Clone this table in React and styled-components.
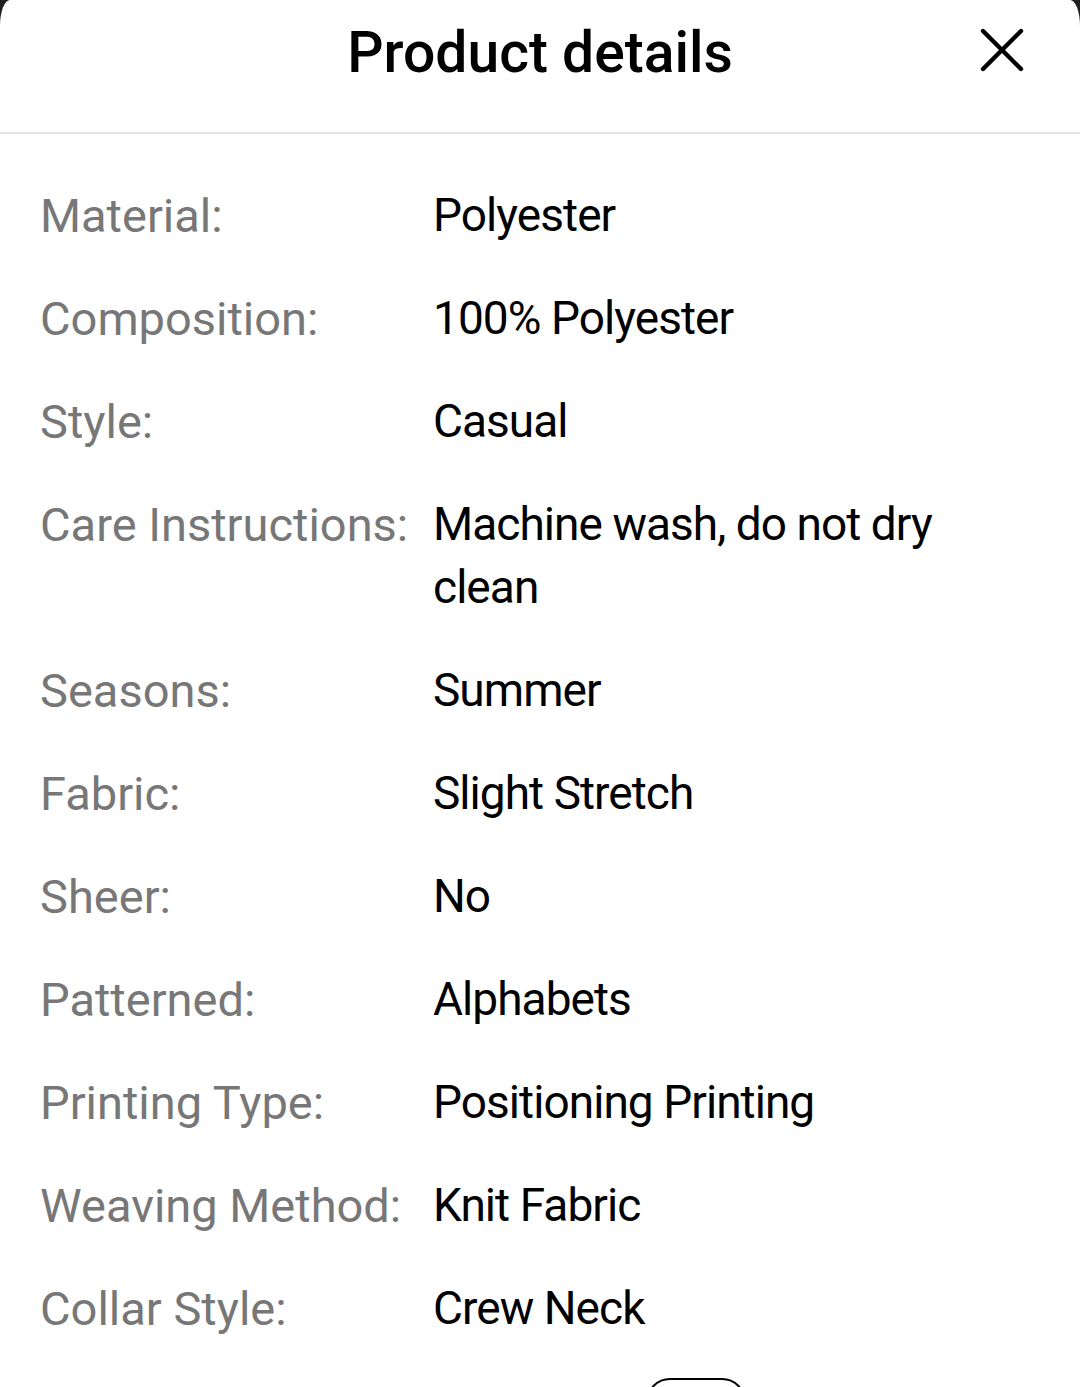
import React from "react";
import styled, { createGlobalStyle } from "styled-components";

const Global = createGlobalStyle`
  html, body { margin: 0; padding: 0; background: #1f1f1f; }
  body { overflow: hidden; font-family: Roboto, "Noto Sans", "Liberation Sans", sans-serif; }
  * { box-sizing: border-box; }
`;

const Sheet = styled.div`
  background: #fff;
  min-height: 1387px;
  border-radius: 10px 10px 0 0 / 26px 26px 0 0;
  overflow: hidden;
`;

const Header = styled.header`
  position: relative;
  height: 134px;
  display: flex;
  align-items: flex-start;
  justify-content: center;
  border-bottom: 2px solid #e3e3e3;
`;

const Title = styled.h1`
  margin: 0;
  padding-top: 19px;
  font-size: 57px;
  line-height: 68px;
  font-weight: 500;
  color: #000;
`;

const CloseButton = styled.button`
  position: absolute;
  top: 26px;
  right: 54px;
  width: 48px;
  height: 48px;
  padding: 0;
  border: none;
  background: none;
  display: flex;
  align-items: center;
  justify-content: center;
`;

const List = styled.dl`
  margin: 0;
  padding: 50px 0 0 40px;
  display: flex;
  flex-direction: column;
  gap: 40px;
`;

const Row = styled.div`
  display: grid;
  grid-template-columns: 393px 1fr;
  padding-right: 60px;
`;

const Label = styled.dt`
  font-size: 47px;
  line-height: 63px;
  color: #777;
  white-space: nowrap;
`;

const Value = styled.dd`
  margin: 0;
  font-size: 46px;
  line-height: 63px;
  letter-spacing: -0.95px;
  color: #000;
`;

const Footer = styled.div`
  display: flex;
  padding: 38px 0 0 646px;
`;

const OutlineButton = styled.button`
  width: 100px;
  height: 60px;
  border: 2.5px solid #000;
  border-radius: 24px;
  background: #fff;
`;

const rows = [
  ["Material:", "Polyester"],
  ["Composition:", "100% Polyester"],
  ["Style:", "Casual"],
  ["Care Instructions:", "Machine wash, do not dry clean"],
  ["Seasons:", "Summer"],
  ["Fabric:", "Slight Stretch"],
  ["Sheer:", "No"],
  ["Patterned:", "Alphabets"],
  ["Printing Type:", "Positioning Printing"],
  ["Weaving Method:", "Knit Fabric"],
  ["Collar Style:", "Crew Neck"],
];

export default function App() {
  return (
    <>
      <Global />
      <Sheet>
        <Header>
          <Title>Product details</Title>
          <CloseButton aria-label="Close">
            <svg width="44" height="44" viewBox="0 0 44 44">
              <path
                d="M3 3 L41 41 M41 3 L3 41"
                stroke="#000"
                strokeWidth="4.4"
                strokeLinecap="round"
                fill="none"
              />
            </svg>
          </CloseButton>
        </Header>
        <List>
          {rows.map(([k, v]) => (
            <Row key={k}>
              <Label>{k}</Label>
              <Value>{v}</Value>
            </Row>
          ))}
        </List>
        <Footer>
          <OutlineButton aria-label="More" />
        </Footer>
      </Sheet>
    </>
  );
}
